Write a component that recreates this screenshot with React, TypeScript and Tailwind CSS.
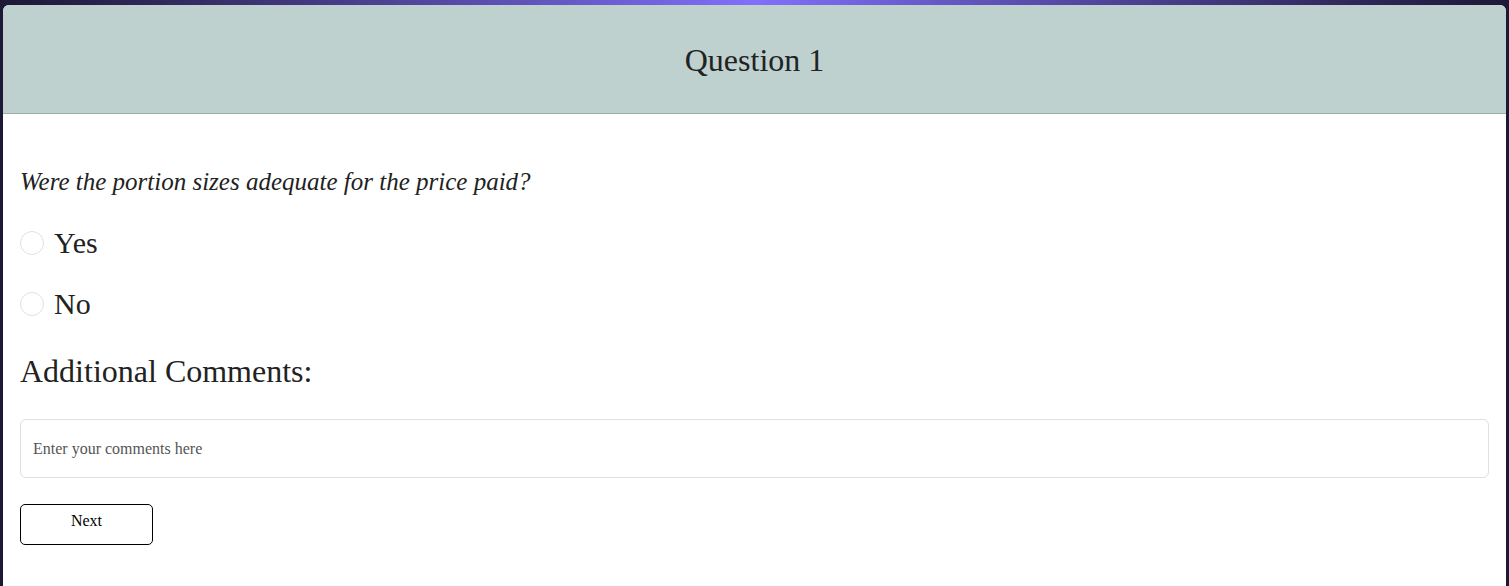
const serif = { fontFamily: '"Liberation Serif", "Times New Roman", serif' };

export default function App() {
  return (
    <div
      className="min-h-screen bg-gradient-to-r from-[#1c1836] via-[#8070fb] to-[#1c1836] px-[3px] pt-[5px]"
      style={serif}
    >
      <div className="h-[600px] overflow-hidden rounded-md bg-white">
        <div className="flex h-[109px] items-center justify-center border-b border-[#9badaa] bg-[#bed1cf] pt-[1px]">
          <h1 className="text-[32px] leading-none text-[#222]">Question 1</h1>
        </div>

        <div className="flex flex-col px-[17px] pt-[54px]">
          <p className="text-[25px] italic leading-[28px] text-[#222]">
            Were the portion sizes adequate for the price paid?
          </p>

          <label className="mt-[31px] flex h-[32px] items-center gap-[10px]">
            <span className="h-[24px] w-[24px] rounded-full border border-[#dedfe3] bg-white" />
            <span className="text-[30px] leading-none text-[#222]">Yes</span>
          </label>

          <label className="mt-[29px] flex h-[32px] items-center gap-[10px]">
            <span className="h-[24px] w-[24px] rounded-full border border-[#dedfe3] bg-white" />
            <span className="text-[30px] leading-none text-[#222]">No</span>
          </label>

          <h2 className="mt-[32px] text-[32px] leading-[38px] text-[#222]">
            Additional Comments:
          </h2>

          <div className="mt-[29px] flex h-[59px] items-center rounded-md border border-[#e0e0e4] px-[12px]">
            <input
              className="w-full bg-transparent text-[16px] text-[#333] outline-none placeholder:text-[#555]"
              style={serif}
              placeholder="Enter your comments here"
            />
          </div>

          <button
            className="mt-[26px] h-[41px] w-[133px] rounded-[5px] border border-black bg-white pb-[8px] text-[16px] leading-none text-black"
            style={serif}
          >
            Next
          </button>
        </div>
      </div>
    </div>
  );
}
